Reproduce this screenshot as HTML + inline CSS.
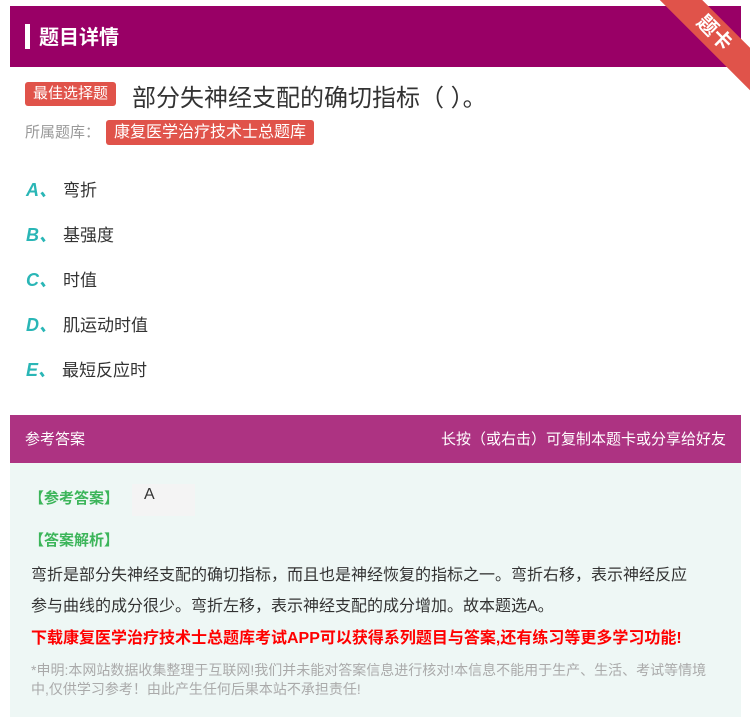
<!DOCTYPE html>
<html><head><meta charset="utf-8"><style>
*{margin:0;padding:0;box-sizing:border-box}
body{width:750px;height:717px;background:#fff;font-family:"Liberation Sans","Noto Sans CJK SC",sans-serif;position:relative;overflow:hidden}
.hd{position:absolute;left:10px;top:6px;width:731px;height:61px;background:#990066}
.hd .bar{position:absolute;left:15px;top:18px;width:5px;height:25px;background:#fff}
.hd .t{position:absolute;left:29px;top:15px;color:#fff;font-size:20px;font-weight:bold}
.rib{position:absolute;right:-34px;top:18px;width:140px;height:30px;background:#e0534a;transform:rotate(45deg);color:#fff;text-align:center;font-size:20px;line-height:30px;font-weight:bold}
.tag{position:absolute;background:#e0534a;color:#fff;border-radius:3px;font-size:15px;padding:0 8px;height:24px;line-height:24px}
.q{position:absolute;left:132px;top:78px;font-size:24px;color:#333}
.lib{position:absolute;left:25px;top:121px;font-size:15px;color:#999}
.opt{position:absolute;left:26px;font-size:17px;color:#333}
.opt b{color:#2ab6b6;font-style:italic;font-size:18px;margin-right:6px}
.ah{position:absolute;left:10px;top:415px;width:731px;height:48px;background:#ad3382;color:#fff;font-size:15px}
.ab{position:absolute;left:10px;top:463px;width:731px;height:254px;background:#eef7f5}
.g{color:#3cb55a;font-size:15px;font-weight:bold;position:absolute}
.p{position:absolute;left:31px;font-size:16px;color:#333}
</style></head><body>
<div class="hd"><div class="bar"></div><div class="t">题目详情</div></div>
<div class="rib">题卡</div>
<div class="tag" style="left:25px;top:82px">最佳选择题</div>
<div class="q">部分失神经支配的确切指标（ ）。</div>
<div class="lib">所属题库：</div>
<div class="tag" style="left:106px;top:120px;font-size:16px;height:25px;line-height:25px">康复医学治疗技术士总题库</div>
<div class="opt" style="top:176px"><b>A、</b>弯折</div>
<div class="opt" style="top:221px"><b>B、</b>基强度</div>
<div class="opt" style="top:266px"><b>C、</b>时值</div>
<div class="opt" style="top:311px"><b>D、</b>肌运动时值</div>
<div class="opt" style="top:356px"><b>E、</b>最短反应时</div>
<div class="ah"><span style="position:absolute;left:15px;top:13px">参考答案</span><span style="position:absolute;right:15px;top:13px">长按（或右击）可复制本题卡或分享给好友</span></div>
<div class="ab"></div>
<div class="g" style="left:29px;top:487px">【参考答案】</div>
<div style="position:absolute;left:132px;top:484px;width:63px;height:32px;background:#f4f4f4;font-size:16px;color:#333;padding:2px 12px">A</div>
<div class="g" style="left:29px;top:529px">【答案解析】</div>
<div class="p" style="top:561px">弯折是部分失神经支配的确切指标，而且也是神经恢复的指标之一。弯折右移，表示神经反应</div>
<div class="p" style="top:592px">参与曲线的成分很少。弯折左移，表示神经支配的成分增加。故本题选A。</div>
<div class="p" style="top:624px;color:#f00;font-weight:bold">下载康复医学治疗技术士总题库考试APP可以获得系列题目与答案,还有练习等更多学习功能!</div>
<div class="p" style="top:661px;color:#aaa;font-size:14px;line-height:19px;width:690px">*申明:本网站数据收集整理于互联网!我们并未能对答案信息进行核对!本信息不能用于生产、生活、考试等情境中,仅供学习参考！由此产生任何后果本站不承担责任!</div>
</body></html>
